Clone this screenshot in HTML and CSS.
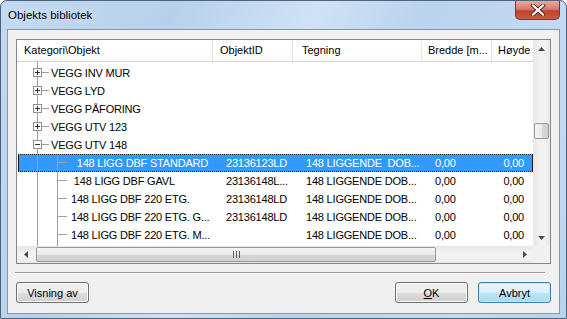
FILE: index.html
```html
<!DOCTYPE html>
<html lang="no">
<head>
    <meta charset="UTF-8">
    <title>Objekts bibliotek</title>
    <link rel="stylesheet" href="styles.css">
</head>
<body>
    <div class="window">
        <div class="titlebar">
            <span class="title">Objekts bibliotek</span>
            <div class="close">
                <svg width="16" height="12" viewBox="0 0 16 12">
                    <path d="M3 1.5L13 10.5M13 1.5L3 10.5" stroke="#4a2a2a" stroke-width="4" stroke-linecap="square"/>
                    <path d="M3 1.5L13 10.5M13 1.5L3 10.5" stroke="#fff" stroke-width="2.2" stroke-linecap="square"/>
                </svg>
            </div>
        </div>

        <div class="client">
            <div class="list">
                <div class="list-main">
                    <div class="header">
                        <div class="hcell">Kategori\Objekt</div>
                        <div class="hcell">ObjektID</div>
                        <div class="hcell pad9">Tegning</div>
                        <div class="hcell pad6">Bredde [m...</div>
                        <div class="hcell pad6 last">Høyde</div>
                    </div>
                    <div class="rows">
                        <div class="stub"></div>

                        <div class="row">
                            <div class="cell c1">
                                <svg class="tree" width="34" height="18"><path class="ln" d="M20.5 0V18M25 8.5H32"/><rect class="bx" x="16.5" y="4.5" width="8" height="8"/><path class="pm" d="M18 8.5H23M20.5 6V11"/></svg>
                                <span>VEGG INV MUR</span>
                            </div>
                        </div>
                        <div class="row">
                            <div class="cell c1">
                                <svg class="tree" width="34" height="18"><path class="ln" d="M20.5 0V18M25 8.5H32"/><rect class="bx" x="16.5" y="4.5" width="8" height="8"/><path class="pm" d="M18 8.5H23M20.5 6V11"/></svg>
                                <span>VEGG LYD</span>
                            </div>
                        </div>
                        <div class="row">
                            <div class="cell c1">
                                <svg class="tree" width="34" height="18"><path class="ln" d="M20.5 0V18M25 8.5H32"/><rect class="bx" x="16.5" y="4.5" width="8" height="8"/><path class="pm" d="M18 8.5H23M20.5 6V11"/></svg>
                                <span>VEGG PÅFORING</span>
                            </div>
                        </div>
                        <div class="row">
                            <div class="cell c1">
                                <svg class="tree" width="34" height="18"><path class="ln" d="M20.5 0V18M25 8.5H32"/><rect class="bx" x="16.5" y="4.5" width="8" height="8"/><path class="pm" d="M18 8.5H23M20.5 6V11"/></svg>
                                <span>VEGG UTV 123</span>
                            </div>
                        </div>
                        <div class="row">
                            <div class="cell c1">
                                <svg class="tree" width="34" height="18"><path class="ln" d="M20.5 0V18M25 8.5H32"/><rect class="bx" x="16.5" y="4.5" width="8" height="8"/><path class="pm" d="M18 8.5H23"/></svg>
                                <span>VEGG UTV 148</span>
                            </div>
                        </div>

                        <div class="row sel">
                            <div class="cell c1">
                                <svg class="tree" width="54" height="18"><path class="ln" d="M20.5 0V18M40.5 0V18M41 8.5H50"/></svg>
                                <span>  148 LIGG DBF STANDARD</span>
                            </div>
                            <div class="cell">23136123LD</div>
                            <div class="cell">148 LIGGENDE  DOB...</div>
                            <div class="cell">0,00</div>
                            <div class="cell num">0,00</div>
                        </div>
                        <div class="row">
                            <div class="cell c1">
                                <svg class="tree" width="54" height="18"><path class="ln" d="M20.5 0V18M40.5 0V18M41 8.5H50"/></svg>
                                <span> 148 LIGG DBF GAVL</span>
                            </div>
                            <div class="cell">23136148L...</div>
                            <div class="cell">148 LIGGENDE DOB...</div>
                            <div class="cell">0,00</div>
                            <div class="cell num">0,00</div>
                        </div>
                        <div class="row">
                            <div class="cell c1">
                                <svg class="tree" width="54" height="18"><path class="ln" d="M20.5 0V18M40.5 0V18M41 8.5H50"/></svg>
                                <span>148 LIGG DBF 220 ETG.</span>
                            </div>
                            <div class="cell">23136148LD</div>
                            <div class="cell">148 LIGGENDE DOB...</div>
                            <div class="cell">0,00</div>
                            <div class="cell num">0,00</div>
                        </div>
                        <div class="row">
                            <div class="cell c1">
                                <svg class="tree" width="54" height="18"><path class="ln" d="M20.5 0V18M40.5 0V18M41 8.5H50"/></svg>
                                <span>148 LIGG DBF 220 ETG. G...</span>
                            </div>
                            <div class="cell">23136148LD</div>
                            <div class="cell">148 LIGGENDE DOB...</div>
                            <div class="cell">0,00</div>
                            <div class="cell num">0,00</div>
                        </div>
                        <div class="row">
                            <div class="cell c1">
                                <svg class="tree" width="54" height="18"><path class="ln" d="M20.5 0V18M40.5 0V18M41 8.5H50"/></svg>
                                <span>148 LIGG DBF 220 ETG. M...</span>
                            </div>
                            <div class="cell"></div>
                            <div class="cell">148 LIGGENDE DOB...</div>
                            <div class="cell">0,00</div>
                            <div class="cell num">0,00</div>
                        </div>

                        <div class="stub stub2"></div>
                    </div>
                </div>

                <div class="vscroll">
                    <div class="sbtn">
                        <svg width="7" height="4"><path d="M3.5 0L7 4H0Z" fill="#4d4d4d"/></svg>
                    </div>
                    <div class="vtrack">
                        <div class="vthumb"></div>
                    </div>
                    <div class="sbtn">
                        <svg width="7" height="4"><path d="M0 0H7L3.5 4Z" fill="#4d4d4d"/></svg>
                    </div>
                </div>

                <div class="hscroll">
                    <div class="sbtn">
                        <svg width="4" height="7"><path d="M4 0V7L0 3.5Z" fill="#4d4d4d"/></svg>
                    </div>
                    <div class="htrack">
                        <div class="hthumb">
                            <svg width="7" height="7"><path d="M0.5 0V7M3.5 0V7M6.5 0V7" stroke="#5e5e5e"/></svg>
                        </div>
                    </div>
                    <div class="sbtn">
                        <svg width="4" height="7"><path d="M0 0L4 3.5L0 7Z" fill="#4d4d4d"/></svg>
                    </div>
                </div>

                <div class="corner"></div>
            </div>

            <div class="sep"></div>

            <div class="buttons">
                <button class="btn">Visning av</button>
                <div class="spacer"></div>
                <button class="btn"><u>O</u>K</button>
                <button class="btn default">Avbryt</button>
            </div>
        </div>
    </div>
</body>
</html>
```

FILE: styles.css
```css
body {
    margin: 0;
    font-family: "Liberation Sans", Arial, sans-serif;
    font-size: 11px;
    background: #ffffff;
}
.window {
    width: 567px;
    height: 319px;
    box-sizing: border-box;
    border: 1px solid #50627a;
    border-radius: 7px 7px 0 0;
    background: linear-gradient(115deg, #c2d9f1 0%, #b7d1ec 25%, #cfe2f5 45%, #bad3ee 60%, #c4dbf2 85%, #b9d2ec 100%);
    display: flex;
    flex-direction: column;
}
.titlebar {
    height: 28px;
    display: flex;
    align-items: flex-start;
    justify-content: space-between;
}
.title {
    font-size: 11.5px;
    color: #000;
    margin: 8px 0 0 7px;
    text-shadow: 0 0 8px #fff;
}
.close {
    width: 45px;
    height: 19px;
    margin-right: 6px;
    box-sizing: border-box;
    border: 1px solid #6e3a3a;
    border-top: none;
    border-radius: 0 0 5px 5px;
    background: linear-gradient(#e8a99c 0%, #d77d6c 45%, #c2412c 55%, #cc5a3e 100%);
    display: flex;
    align-items: center;
    justify-content: center;
}
.client {
    width: 553px;
    height: 285px;
    margin-left: 6px;
    box-sizing: border-box;
    border: 1px solid #8397ae;
    background: #f0f0f0;
    padding: 9px 8px 0 8px;
    display: flex;
    flex-direction: column;
}

/* list view */
.list {
    height: 225px;
    box-sizing: border-box;
    border: 1px solid #828790;
    background: #fff;
    display: grid;
    grid-template-columns: 516px 17px;
    grid-template-rows: 206px 17px;
}
.list-main {
    overflow: hidden;
}
.header, .row {
    display: grid;
    grid-template-columns: 196px 80px 129px 70px 41px;
}
.header {
    height: 22px;
    box-sizing: border-box;
    border-bottom: 1px solid #d5d5d5;
    background: linear-gradient(#ffffff, #ffffff 60%, #f7f8fa);
}
.hcell {
    padding-left: 7px;
    line-height: 21px;
    border-right: 1px solid #e3e4e6;
    white-space: nowrap;
    overflow: hidden;
}
.hcell.pad9 {
    padding-left: 9px;
}
.hcell.pad6 {
    padding-left: 6px;
}
.hcell.last {
    border-right: none;
}
.stub {
    height: 2px;
    background: linear-gradient(#a0a0a0, #a0a0a0) 20px 0 / 1px 100% no-repeat;
}
.stub2 {
    background:
        linear-gradient(#a0a0a0, #a0a0a0) 20px 0 / 1px 100% no-repeat,
        linear-gradient(#a0a0a0, #a0a0a0) 40px 0 / 1px 100% no-repeat;
}
.row {
    height: 18px;
    color: #000;
    letter-spacing: -0.2px;
}
.cell {
    padding-left: 13px;
    line-height: 18px;
    white-space: pre;
    overflow: hidden;
}
.cell.c1 {
    padding-left: 0;
    display: flex;
    align-items: center;
}
.cell.num {
    padding-left: 0;
    padding-right: 9px;
    text-align: right;
}
.tree {
    flex: none;
    display: block;
    shape-rendering: crispEdges;
}
.tree .ln {
    stroke: #a0a0a0;
    fill: none;
}
.tree .bx {
    stroke: #919191;
    fill: #fff;
}
.tree .pm {
    stroke: #333;
    fill: none;
}
.row.sel {
    position: relative;
    color: #fff;
    background: linear-gradient(to right, #fff 1px, #3399ff 1px);
}
.row.sel::after {
    content: "";
    position: absolute;
    top: 0;
    bottom: 0;
    left: 1px;
    right: 0;
    border: 1px solid;
    border-image: repeating-linear-gradient(90deg, #1a1a1a 0 1px, #f08a24 1px 2px) 1;
}

/* scrollbars */
.vscroll {
    grid-row: 1;
    grid-column: 2;
    display: flex;
    flex-direction: column;
    background: linear-gradient(90deg, #e6e6e6, #f2f2f2 40%, #f2f2f2 70%, #e8e8e8);
}
.hscroll {
    grid-row: 2;
    grid-column: 1;
    display: flex;
    background: linear-gradient(#e6e6e6, #f2f2f2 40%, #f2f2f2 70%, #e8e8e8);
}
.sbtn {
    width: 17px;
    height: 17px;
    flex: none;
    display: flex;
    align-items: center;
    justify-content: center;
}
.vtrack {
    flex: 1;
    padding-top: 66px;
}
.vthumb {
    height: 16px;
    margin: 0 1px;
    box-sizing: border-box;
    border: 1px solid #979797;
    border-radius: 2px;
    background: linear-gradient(90deg, #f4f4f4, #e9e9e9 50%, #d8d8d8 51%, #d0d0d0);
}
.htrack {
    flex: 1;
    padding: 1px 0 0 2px;
}
.hthumb {
    width: 400px;
    height: 15px;
    box-sizing: border-box;
    border: 1px solid #979797;
    border-radius: 2px;
    background: linear-gradient(#f4f4f4, #e9e9e9 50%, #d8d8d8 51%, #d0d0d0);
    display: flex;
    align-items: center;
    justify-content: center;
}
.corner {
    grid-row: 2;
    grid-column: 2;
    background: #f0f0f0;
}

/* bottom */
.sep {
    height: 1px;
    margin: 8px 6px 0 -1px;
    background: #a0a0a0;
    border-bottom: 1px solid #fff;
}
.buttons {
    display: flex;
    gap: 10px;
    margin-top: 8px;
}
.spacer {
    flex: 1;
}
.btn {
    width: 73px;
    height: 21px;
    padding: 0;
    font-family: "Liberation Sans", Arial, sans-serif;
    font-size: 11px;
    color: #000;
    border: 1px solid #707070;
    border-radius: 3px;
    background: linear-gradient(#f2f2f2, #ebebeb 50%, #dddddd 51%, #cfcfcf);
    box-shadow: inset 0 0 0 1px #fcfcfc;
}
.btn.default {
    border-color: #3c7fb1;
    background: linear-gradient(#eaf6fd, #d9f0fc 50%, #bee6fd 51%, #a7d9f5);
    box-shadow: inset 0 0 0 1px #bfe7fd;
}
```
